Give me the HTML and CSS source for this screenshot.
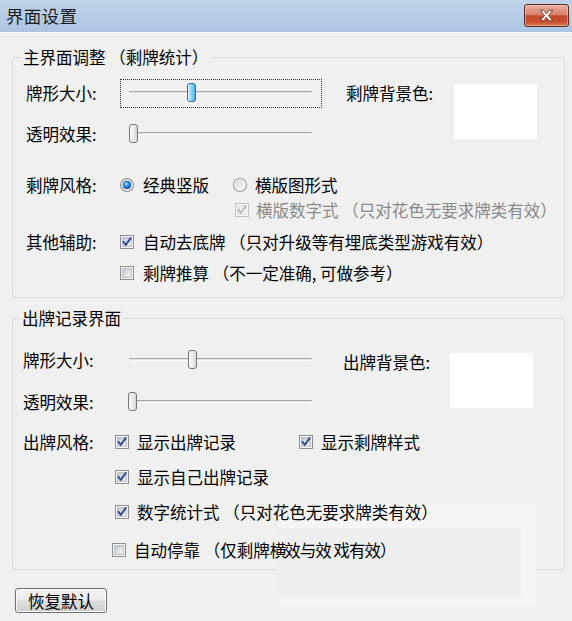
FILE: index.html
```html
<!DOCTYPE html>
<html lang="zh-CN">
<head>
<meta charset="utf-8">
<title>界面设置</title>
<link rel="stylesheet" href="styles.css">
</head>
<body>
<svg class="defs" aria-hidden="true">
  <defs>
    <linearGradient id="cbIn" x1="0" y1="0" x2="1" y2="1">
      <stop offset="0" stop-color="#c3c8d0"/>
      <stop offset="1" stop-color="#f8f8f8"/>
    </linearGradient>
    <linearGradient id="cbDis" x1="0" y1="0" x2="1" y2="1">
      <stop offset="0" stop-color="#e6e6e6"/>
      <stop offset="1" stop-color="#fafafa"/>
    </linearGradient>
    <linearGradient id="rdBg" x1="0" y1="0" x2="1" y2="1">
      <stop offset="0" stop-color="#d2d5da"/>
      <stop offset="1" stop-color="#fbfbfb"/>
    </linearGradient>
    <radialGradient id="rdDot" cx="0.4" cy="0.35" r="0.7">
      <stop offset="0" stop-color="#a6dcf8"/>
      <stop offset="0.45" stop-color="#2f8fd8"/>
      <stop offset="1" stop-color="#114f9a"/>
    </radialGradient>
    <symbol id="cb-on" viewBox="0 0 13 13">
      <rect x="0.5" y="0.5" width="12" height="12" fill="#fff" stroke="#8e8f8f"/>
      <rect x="2.5" y="2.5" width="8" height="8" fill="url(#cbIn)" stroke="#b4b9c0" stroke-width="1"/>
      <path d="M3.2 6.4 L5.4 9.2 L9.9 2.9" fill="none" stroke="#3b4f99" stroke-width="1.9" stroke-linecap="round" stroke-linejoin="round"/>
    </symbol>
    <symbol id="cb-off" viewBox="0 0 13 13">
      <rect x="0.5" y="0.5" width="12" height="12" fill="#fff" stroke="#8e8f8f"/>
      <rect x="2.5" y="2.5" width="8" height="8" fill="url(#cbIn)" stroke="#b4b9c0" stroke-width="1"/>
    </symbol>
    <symbol id="cb-dis" viewBox="0 0 13 13">
      <rect x="0.5" y="0.5" width="12" height="12" fill="#fcfcfc" stroke="#c2c2c2"/>
      <rect x="2.5" y="2.5" width="8" height="8" fill="url(#cbDis)" stroke="#dedede" stroke-width="1"/>
      <path d="M3.2 6.4 L5.4 9.2 L9.9 2.9" fill="none" stroke="#b9b9b9" stroke-width="1.7" stroke-linecap="round" stroke-linejoin="round"/>
    </symbol>
    <symbol id="rd-on" viewBox="0 0 13 13">
      <circle cx="6.5" cy="6.5" r="6" fill="url(#rdBg)" stroke="#8e8f8f"/>
      <circle cx="6.5" cy="6.5" r="3.6" fill="url(#rdDot)" stroke="#1d5a9e" stroke-width="0.6"/>
    </symbol>
    <symbol id="rd-off" viewBox="0 0 13 13">
      <circle cx="6.5" cy="6.5" r="6" fill="#fafafa" stroke="#9a9b9b"/>
      <circle cx="6.5" cy="6.5" r="4.2" fill="url(#rdBg)"/>
    </symbol>
  </defs>
</svg>

<div class="window">
  <div class="titlebar">
    <span class="title">界面设置</span>
    <button class="close" type="button" aria-label="关闭">
      <svg width="17" height="13" viewBox="0 0 16 12">
        <path d="M2 1 H5.5 L8 4.2 L10.5 1 H14 L9.8 6 L14 11 H10.5 L8 7.8 L5.5 11 H2 L6.2 6 Z" fill="#fafafa" stroke="#6a3127" stroke-width="0.8" stroke-linejoin="round"/>
      </svg>
    </button>
  </div>

  <div class="client">
    <fieldset class="group g1">
      <legend>主界面调整 （剩牌统计）</legend>

      <div class="top-area">
        <div class="slider-rows">
          <div class="row ra">
            <span class="label">牌形大小:</span>
            <div class="slider focused">
              <div class="track"></div>
              <span class="thumb active" style="left:66px"></span>
            </div>
          </div>
          <div class="row rb">
            <span class="label">透明效果:</span>
            <div class="slider">
              <div class="track"></div>
              <span class="thumb" style="left:8px"></span>
            </div>
          </div>
        </div>
        <div class="color-pick">
          <span class="clabel">剩牌背景色:</span>
          <span class="swatch"></span>
        </div>
      </div>

      <div class="row rc">
        <span class="label">剩牌风格:</span>
        <span class="opt w113"><svg class="ico"><use href="#rd-on"/></svg><span>经典竖版</span></span>
        <span class="opt"><svg class="ico"><use href="#rd-off"/></svg><span>横版图形式</span></span>
      </div>
      <div class="row rd">
        <span class="opt dis"><svg class="ico"><use href="#cb-dis"/></svg><span>横版数字式 （只对花色无要求牌类有效）</span></span>
      </div>
      <div class="row re">
        <span class="label">其他辅助:</span>
        <span class="opt"><svg class="ico"><use href="#cb-on"/></svg><span>自动去底牌 （只对升级等有埋底类型游戏有效）</span></span>
      </div>
      <div class="row rf indent1">
        <span class="opt"><svg class="ico"><use href="#cb-off"/></svg><span>剩牌推算 （不一定准确, 可做参考）</span></span>
      </div>
    </fieldset>

    <fieldset class="group g2">
      <legend>出牌记录界面</legend>

      <div class="top-area">
        <div class="slider-rows">
          <div class="row s1">
            <span class="label wide">牌形大小:</span>
            <div class="slider">
              <div class="track"></div>
              <span class="thumb" style="left:67px"></span>
            </div>
          </div>
          <div class="row s2">
            <span class="label wide">透明效果:</span>
            <div class="slider">
              <div class="track"></div>
              <span class="thumb" style="left:7px"></span>
            </div>
          </div>
        </div>
        <div class="color-pick">
          <span class="clabel">出牌背景色:</span>
          <span class="swatch"></span>
        </div>
      </div>

      <div class="row t3">
        <span class="label">出牌风格:</span>
        <span class="opt w184"><svg class="ico"><use href="#cb-on"/></svg><span>显示出牌记录</span></span>
        <span class="opt"><svg class="ico"><use href="#cb-on"/></svg><span>显示剩牌样式</span></span>
      </div>
      <div class="row t4 indent2">
        <span class="opt"><svg class="ico"><use href="#cb-on"/></svg><span>显示自己出牌记录</span></span>
      </div>
      <div class="row t5 indent2">
        <span class="opt"><svg class="ico"><use href="#cb-on"/></svg><span>数字统计式 （只对花色无要求牌类有效）</span></span>
      </div>
      <div class="row t6 indent3">
        <span class="opt"><svg class="ico"><use href="#cb-off"/></svg><span>自动停靠 （仅剩牌横<span class="ghost">效与效 戏有效）</span></span></span>
      </div>
    </fieldset>

    <div class="footer">
      <button class="btn" type="button">恢复默认</button>
    </div>
  </div>

  <div class="glitch"><div class="glitch-inner"></div></div>
</div>
</body>
</html>
```

FILE: styles.css
```css
html, body {
  margin: 0;
  padding: 0;
  background: #f0f0f0;
}

body {
  font-family: "Noto Sans CJK SC", "Noto Sans", "DejaVu Sans", sans-serif;
}

.defs {
  position: absolute;
  width: 0;
  height: 0;
  overflow: hidden;
}

.window {
  position: relative;
  width: 572px;
  height: 621px;
  overflow: hidden;
  background: #f0f0f0;
  color: #000;
  font-size: 16.5px;
}

/* ---------- title bar ---------- */
.titlebar {
  height: 33px;
  display: flex;
  align-items: flex-start;
  padding-left: 6px;
  box-sizing: border-box;
  background: linear-gradient(#c0d4eb, #b5cbe5 60%, #abc4e1);
}

.title {
  font-size: 17.5px;
  line-height: 32px;
  color: #1b1b1b;
  letter-spacing: 0.3px;
}

.close {
  margin: 4px 3px 0 auto;
  width: 45px;
  height: 23px;
  padding: 0;
  box-sizing: border-box;
  border: 1px solid #5b2a22;
  border-radius: 3px;
  background: linear-gradient(#eab0a1 0%, #d9836b 45%, #c5492d 52%, #c74f30 80%, #dc7752 100%);
  box-shadow: inset 0 0 0 1px rgba(255, 220, 205, 0.45);
  display: flex;
  align-items: center;
  justify-content: center;
}

.close svg {
  display: block;
}

/* ---------- client area ---------- */
.client {
  padding: 0 7px 0 12px;
  border-top: 1px solid #fafafa;
  margin-top: -1px;
}

.group {
  margin: 13px 0 0 0;
  width: 553px;
  box-sizing: border-box;
  min-width: 0;
  border: 1px solid #d3dde4;
  border-radius: 3px;
}

.group legend {
  padding: 0 2px;
  font-size: 16.5px;
  line-height: 22px;
}

.g1 {
  padding: 0 0 9px 13px;
}

.g1 legend {
  margin-left: -5px;
}

.g2 {
  margin-top: 9px;
  padding: 0 0 4px 10px;
}

.g2 legend {
  margin-left: -3px;
}

/* ---------- rows ---------- */
.row {
  position: relative;
  z-index: 1;
  display: flex;
  align-items: center;
  height: 30px;
  line-height: 22px;
  white-space: nowrap;
}

.label {
  flex: none;
  width: 94px;
}

.g2 .label {
  width: 92px;
}

.g2 .label.wide {
  width: 97px;
}

.top-area {
  display: flex;
  align-items: flex-start;
}

.g1 .top-area {
  margin-top: 10px;
}

.g2 .top-area {
  margin-top: 16px;
}

.g1 .rb {
  margin-top: 11px;
}

.g2 .s2 {
  margin-top: 12px;
}

.color-pick {
  position: relative;
  z-index: 1;
  display: flex;
  align-items: flex-start;
}

.g1 .color-pick {
  margin-left: 24px;
}

.g2 .color-pick {
  margin-left: 21px;
}

.clabel {
  flex: none;
  line-height: 30px;
}

.g1 .clabel {
  width: 108px;
}

.g2 .clabel {
  width: 107px;
  margin-top: 2px;
}

.swatch {
  display: block;
  width: 83px;
  height: 55px;
  background: #fff;
}

.g1 .swatch {
  margin-top: 6px;
}

.g2 .swatch {
  margin-top: 8px;
}

/* slider */
.slider {
  position: relative;
  width: 202px;
  height: 29px;
  box-sizing: border-box;
  padding: 0 9px 0 8px;
  border: 1px solid transparent;
  display: flex;
  align-items: center;
}

.slider.focused {
  border: 1px dotted #333;
}

.track {
  flex: 1;
  height: 3px;
  box-sizing: border-box;
  border-top: 1px solid #a9a9a9;
  border-bottom: 1px solid #fbfbfb;
  background: #e2e2e2;
  border-radius: 1px;
  margin-top: -1px;
}

.thumb {
  position: absolute;
  top: 50%;
  width: 9px;
  height: 19px;
  margin-top: -10px;
  box-sizing: border-box;
  border: 1px solid #767676;
  border-radius: 3px;
  background: linear-gradient(to right, #fbfbfb, #ececec 50%, #d6d6d6);
}

.thumb.active {
  border-color: #2d6c9c;
  background: linear-gradient(to right, #e6f6fd, #92d6f6 45%, #45b3ea);
}

/* options */
.opt {
  display: inline-flex;
  align-items: center;
  gap: 9px;
}

.g2 .opt {
  gap: 8px;
}

.rc .opt + .opt {
  gap: 8px;
}

.w113 {
  width: 113px;
}

.w184 {
  width: 184px;
}

.ico {
  flex: none;
  width: 14px;
  height: 14px;
  display: block;
}

.dis {
  color: #8a8a8a;
  gap: 7px;
}

.g1 .rc {
  margin-top: 21px;
}

.g1 .rd {
  height: 20px;
  padding-left: 209px;
}

.g1 .re {
  margin-top: 7px;
}

.g1 .rf {
  margin-top: 1px;
}

.indent1 {
  padding-left: 94px;
}

.g2 .t3 {
  margin-top: 10px;
}

.g2 .t4 {
  margin-top: 5px;
}

.g2 .t5 {
  margin-top: 5px;
}

.g2 .t6 {
  margin-top: 8px;
}

.indent2 {
  padding-left: 92px;
}

.indent3 {
  padding-left: 89px;
}

.ghost {
  letter-spacing: -1px;
  margin-left: -2px;
}

/* ---------- footer ---------- */
.footer {
  display: flex;
  padding-top: 18px;
}

.btn {
  margin-left: 3px;
  width: 92px;
  height: 25px;
  padding: 0;
  box-sizing: border-box;
  border: 1px solid #707070;
  border-radius: 3px;
  background: linear-gradient(#f3f3f3 0%, #ebebeb 48%, #dddddd 52%, #cfcfcf 100%);
  box-shadow: inset 0 0 0 1px #fbfbfb;
  font-family: inherit;
  font-size: 16.5px;
  line-height: 22px;
  color: #000;
}

/* faint redraw artefact over the lower right corner */
.glitch {
  position: absolute;
  z-index: 0;
  left: 278px;
  top: 503px;
  width: 258px;
  height: 102px;
  background: #f5f5f5;
}

.glitch-inner {
  margin-top: 25px;
  width: 243px;
  height: 69px;
  background: #efefef;
}
```
